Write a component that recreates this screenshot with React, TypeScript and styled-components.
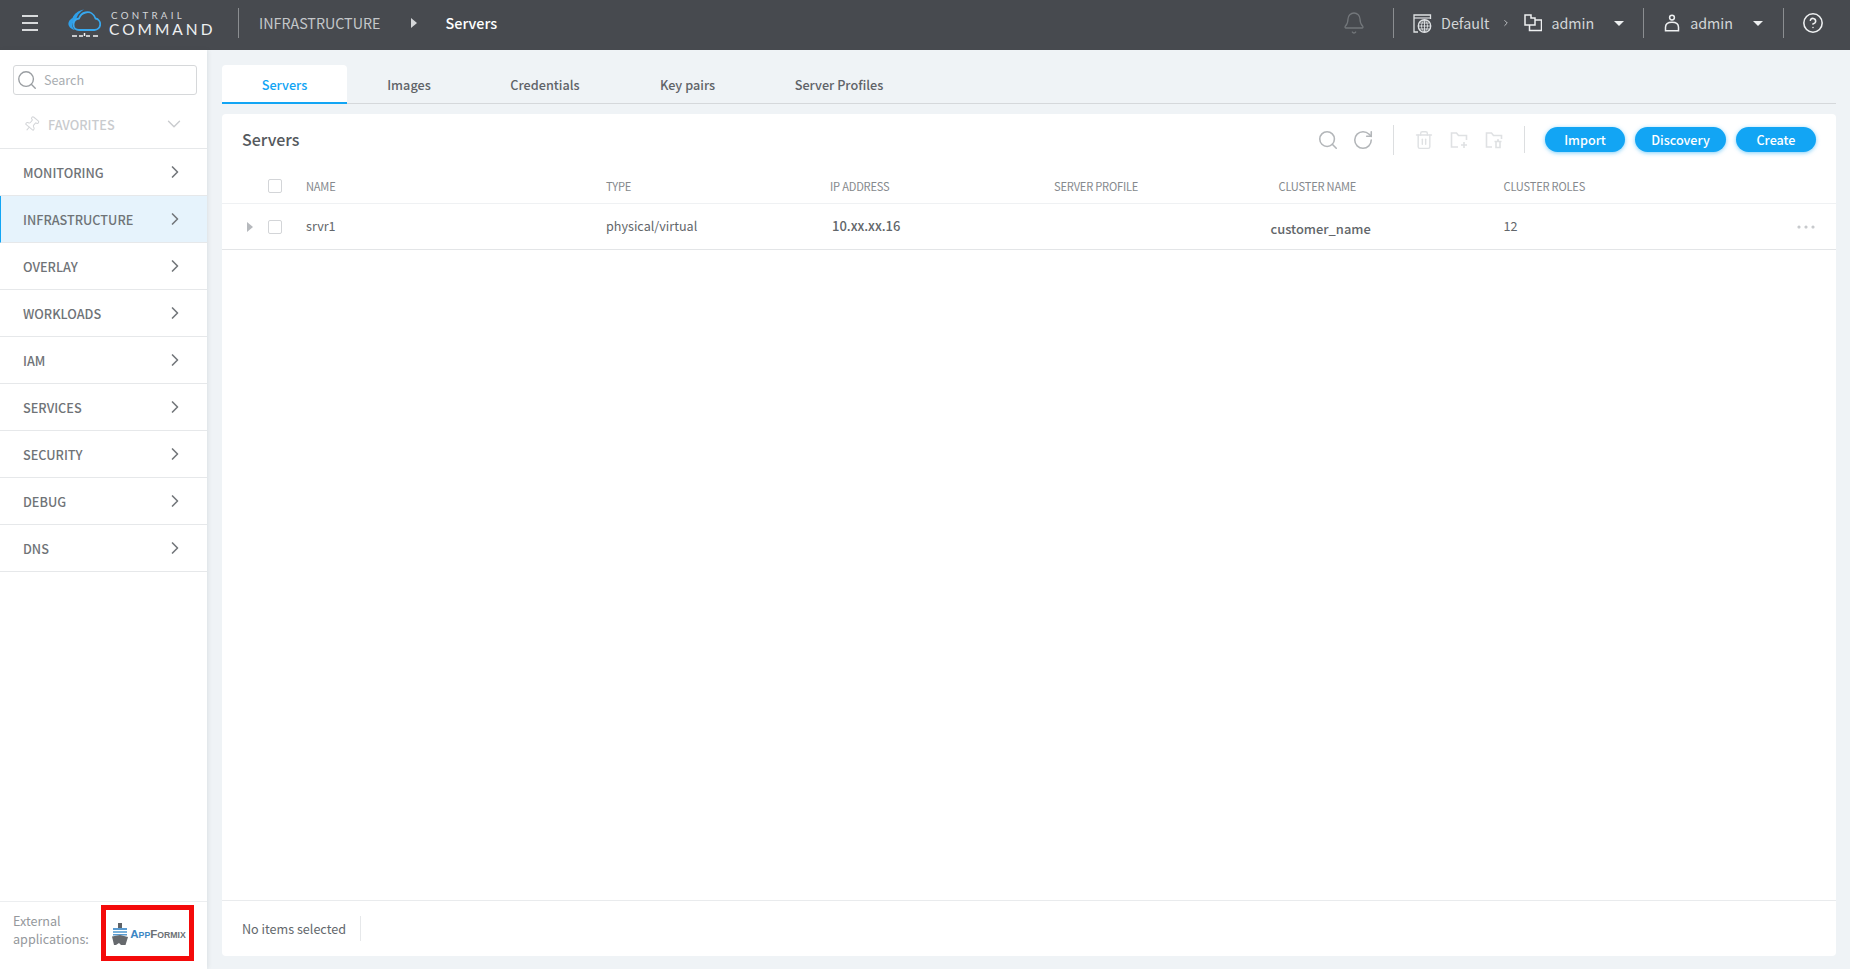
import React from "react";
import styled, { createGlobalStyle } from "styled-components";
import { Search, RotateCw, Trash2, ChevronRight, ChevronDown, Bell, CircleHelp, Pin, Ellipsis } from "lucide-react";

const Global = createGlobalStyle`
  html, body { margin: 0; padding: 0; height: 100%; }
  body { font-family: "Noto Sans CJK SC", "Noto Sans", sans-serif; background: #eff3f6; }
  * { box-sizing: border-box; }
`;

const Page = styled.div`
  width: 1850px; height: 969px; display: flex; flex-direction: column; overflow: hidden;
`;
const TopBar = styled.header`
  height: 50px; flex: none; background: #474a4f; display: flex; align-items: center; color: #e8eaec; padding-bottom: 4px;
`;
const Burger = styled.div`
  width: 16px; margin-left: 22px; display: flex; flex-direction: column; gap: 5px;
  span { display: block; height: 2px; background: #d8dadc; }
`;
const LogoWrap = styled.div`
  margin-left: 29px; display: flex; align-items: center; gap: 8px; width: 171px; height: 100%;
`;
const LogoText = styled.div`
  display: flex; flex-direction: column; font-family: Lato, sans-serif; color: #eef0f1; line-height: 1; padding-top: 3px;
`;
const LogoTop = styled.span`font-size: 9.7px; letter-spacing: 3.3px; margin-bottom: 1px; color: #d5d7d9; padding-left: 2px;`;
const LogoBottom = styled.span`font-size: 15.5px; letter-spacing: 3px;`;
const VRule = styled.div<{ $h?: number; $c?: string; $ml?: number }>`
  width: 1px; height: ${p => p.$h ?? 30}px; background: ${p => p.$c ?? "#8b8e91"}; flex: none; margin-left: ${p => p.$ml ?? 0}px;
`;
const Crumb = styled.span`font-size: 14.3px; color: #c4c7ca; margin: 0 0 2px 20px;`;
const CrumbArrow = styled.span`
  margin-left: 30px; width: 0; height: 0; border-left: 6px solid #d5d7d9;
  border-top: 5px solid transparent; border-bottom: 5px solid transparent;
`;
const CrumbNow = styled.span`font-size: 14.4px; font-weight: 500; color: #fff; margin: 0 0 2px 29px;`;
const TopRight = styled.div`margin-left: auto; display: flex; align-items: center; height: 100%; padding-right: 26px;`;
const TopLabel = styled.span`font-size: 14.3px; color: #d3d6d8; margin-bottom: 2px;`;
const Caret = styled.span`
  width: 0; height: 0; border-top: 5px solid #eef0f1; margin-left: 20px;
  border-left: 5px solid transparent; border-right: 5px solid transparent;
`;
const TopCell = styled.div<{ $gap?: number; $ml?: number }>`
  display: flex; align-items: center; gap: ${p => p.$gap ?? 9}px; margin-left: ${p => p.$ml ?? 0}px;
`;

const Body = styled.div`flex: 1; display: flex; min-height: 0;`;
const Sidebar = styled.aside`
  width: 207px; flex: none; background: #fff; display: flex; flex-direction: column;
  box-shadow: 1px 0 4px rgba(60, 70, 80, 0.1);
`;
const SearchBox = styled.div`
  margin: 15px 10px 0 13px; height: 30px; border: 1px solid #d6d8da; border-radius: 3px;
  display: flex; align-items: center; padding-left: 2px; gap: 6px;
  span { font-size: 12.6px; color: #a9adb1; margin-bottom: 2px; }
`;
const Favorites = styled.div`
  height: 54px; padding: 5px 22px 0 23px; display: flex; align-items: center; border-bottom: 1px solid #e6e8ea;
  span { font-size: 12.7px; font-weight: 500; color: #c9cbce; margin-left: 8px; flex: 1; }
`;
const MenuRow = styled.div<{ $active?: boolean }>`
  height: 47px; display: flex; align-items: center; justify-content: space-between;
  border-bottom: 1px solid #e6e8ea; font-size: 12.7px; font-weight: 500; color: #6f7377;
  background: ${p => (p.$active ? "#e6f3fc" : "#fff")};
  border-left: ${p => (p.$active ? "1px solid #12a5f4" : "0")};
  padding-left: ${p => (p.$active ? "22px" : "23px")};
  padding-right: 22px;
`;
const SideFoot = styled.div`
  margin-top: auto; height: 68px; border-top: 1px solid #eceef0; display: flex; align-items: flex-start; padding: 3px 0 0 13px;
`;
const FootLabel = styled.div`font-size: 12.6px; line-height: 18px; color: #94989c; width: 88px; margin-top: 7px;`;
const RedBox = styled.div`
  width: 93px; height: 56px; border: 5px solid #f40a0a; display: flex; align-items: center; justify-content: center; gap: 2px;
  background: #fff; padding: 2px 0 0 3px;
`;
const AfText = styled.span`
  font-family: "Liberation Sans", sans-serif; font-size: 11.5px; color: #3b86c4; font-weight: 700; white-space: nowrap;
  small { font-size: 8.7px; }
  em { font-style: normal; color: #6c7074; }
`;

const Main = styled.main`flex: 1; padding: 15px 14px 13px 15px; display: flex; flex-direction: column; min-width: 0;`;
const Tabs = styled.nav`
  height: 39px; display: flex; flex: none; border-bottom: 1px solid #d5d8db;
`;
const Tab = styled.div<{ $active?: boolean; $w: number }>`
  width: ${p => p.$w}px; display: flex; align-items: center; justify-content: center; font-size: 12.7px; font-weight: 500;
  color: ${p => (p.$active ? "#12a5f4" : "#5f6368")};
  background: ${p => (p.$active ? "#fff" : "transparent")};
  border-radius: 4px 4px 0 0;
  margin-bottom: -1px;
  padding-top: ${p => (p.$active ? "2px" : "0")};
  border-bottom: ${p => (p.$active ? "2px solid #12a5f4" : "0")};
`;
const Card = styled.section`
  margin-top: 10px; flex: 1; background: #fff; border-radius: 4px; display: flex; flex-direction: column; min-height: 0;
`;
const CardHead = styled.div`
  height: 53px; flex: none; display: flex; align-items: center; padding: 0 20px 2px;
`;
const Title = styled.h2`margin: 0 0 2px; font-size: 16px; font-weight: 500; color: #55595d;`;
const Tools = styled.div`margin-left: auto; display: flex; align-items: center;`;
const Btn = styled.button<{ $w: number; $ml?: number }>`
  width: ${p => p.$w}px; height: 25px; border-radius: 13px; border: 0; background: #12a5f4; color: #fff; padding: 0 0 1px;
  font-family: inherit; font-size: 12.6px; font-weight: 500; margin-left: ${p => p.$ml ?? 10}px;
  box-shadow: 0 1px 4px rgba(18, 165, 244, .55);
`;
const IconSlot = styled.span<{ $ml: number }>`display: flex; margin-left: ${p => p.$ml}px;`;
const Row = styled.div<{ $head?: boolean }>`
  display: grid; grid-template-columns: 84px 300px 224px 224px 224.5px 225px 200.5px 1fr;
  align-items: center;
  height: ${p => (p.$head ? 37 : 46)}px; flex: none;
  padding-top: ${p => (p.$head ? 2 : 0)}px;
  border-bottom: 1px solid ${p => (p.$head ? "#eff1f3" : "#e3e5e7")};
  font-size: ${p => (p.$head ? 11.1 : 12.6)}px;
  letter-spacing: ${p => (p.$head ? "-.2px" : "0")};
  color: ${p => (p.$head ? "#85898d" : "#62666a")};
`;
const Lead = styled.div`position: relative; display: flex; align-items: center; justify-content: flex-end; padding-right: 24px; height: 100%;`;
const Check = styled.span`width: 14px; height: 14px; border: 1px solid #d3d5d8; border-radius: 2px; background: #fff; display: block;`;
const Expand = styled.span`
  position: absolute; left: 25px; top: 50%; margin-top: -5px; width: 0; height: 0;
  border-left: 6px solid #b6b9bd; border-top: 5px solid transparent; border-bottom: 5px solid transparent;
`;
const Cell = styled.span`margin-bottom: 2px;`;
const CellBold = styled.span`font-weight: 500; font-size: 13px; margin-left: 2px;`;
const CellDrop = styled.span`font-weight: 500; font-size: 12.9px; margin-left: -8px; position: relative; top: 3px;`;
const Actions = styled.div`display: flex; justify-content: flex-end; padding-right: 18px;`;
const Spacer = styled.div`flex: 1;`;
const CardFoot = styled.div`
  height: 56px; border-top: 1px solid #e9ebed; display: flex; align-items: center; padding: 0 0 1px 20px; flex: none;
  font-size: 12.6px; color: #62676c;
`;

const Cloud = () => (
  <svg width="34" height="30" viewBox="0 0 34 30" fill="none" style={{ flex: "none" }}>
    <path d="M17 1.5C11 2.5 7 6 5.5 10 2 12 0.5 15 2 18c1 2 3 3.5 6 4-2.5-2-3.5-5-1.5-8 2-2 3-3 3.5-5C11 6 14 3.5 17 1.5z" fill="#2f9fe8" />
    <path d="M12 22h15.5a5.8 5.8 0 0 0 1-11.5C27 6 23 3.5 18.5 4.5 15 5.3 13 7.5 12 10.5 8.5 11 6.5 13.5 6.5 16.5 6.5 19.8 9 22 12 22z" stroke="#38a8ef" strokeWidth="1.8" />
    <path d="M5 28h5M12 28h4M19 28h4M26 28h5M17.5 25v3" stroke="#f4f5f6" strokeWidth="1.5" />
  </svg>
);
const FolderTrash = ({ c }: { c: string }) => (
  <svg width="18" height="18" viewBox="0 0 18 18" fill="none" stroke={c} strokeWidth="1.6" style={{ flex: "none" }}>
    <path d="M7 16H1.5V2h5l2 2.5h8V8" />
    <path d="M9.5 10.5h7M11 10.5V16.5h4V10.5M12 9h2" />
  </svg>
);
const FolderAdd = ({ c }: { c: string }) => (
  <svg width="18" height="18" viewBox="0 0 18 18" fill="none" stroke={c} strokeWidth="1.6" style={{ flex: "none" }}>
    <path d="M8 16H1.5V2h5l2 2.5h8V9" />
    <path d="M14 11v6M11 14h6" />
  </svg>
);
const TenantIcon = () => (
  <svg width="19" height="19" viewBox="0 0 19 19" fill="none" stroke="#dfe2e4" strokeWidth="1.2" style={{ flex: "none" }}>
    <path d="M5 18H1V1h16.5v4" strokeWidth="1.3" />
    <path d="M1 4h16.5" />
    <circle cx="11.5" cy="12" r="6.2" strokeWidth="1.4" />
    <path d="M5.5 12h12M11.5 6v12M6.8 9h9.4M6.8 15h9.4" strokeWidth=".9" />
    <path d="M11.5 5.8c-4 3.5-4 9 0 12.4M11.5 5.8c4 3.5 4 9 0 12.4" strokeWidth=".9" />
  </svg>
);
const ProjectIcon = () => (
  <svg width="18" height="18" viewBox="0 0 18 18" fill="none" stroke="#eef0f1" strokeWidth="1.5" style={{ flex: "none" }}>
    <path d="M1 1h6v3h4v7H1z" />
    <path d="M5.5 11v5.5h12V6h-6.5" />
  </svg>
);
const UserIcon = () => (
  <svg width="18" height="18" viewBox="0 0 18 18" fill="none" stroke="#eef0f1" strokeWidth="1.5" style={{ flex: "none" }}>
    <circle cx="9" cy="3.6" r="2.4" />
    <path d="M2.5 16.8v-3.5c0-3 2.5-5 6.5-5s6.5 2 6.5 5v3.5z" />
  </svg>
);
const ShipLogo = () => (
  <svg width="16" height="22" viewBox="0 0 16 22" style={{ flex: "none" }}>
    <rect x="6" y="0" width="4" height="5" fill="#5f6367" />
    <rect x="1" y="5" width="14" height="2" fill="#5a9bd0" />
    <rect x="1" y="8" width="14" height="2" fill="#7ab2dc" />
    <rect x="1" y="11" width="14" height="1.5" fill="#5a9bd0" />
    <path d="M0 13.5l8-1.5 8 2-2.5 8H9l-2-2-3 2H2z" fill="#66696d" />
  </svg>
);

const menu = ["MONITORING", "INFRASTRUCTURE", "OVERLAY", "WORKLOADS", "IAM", "SERVICES", "SECURITY", "DEBUG", "DNS"];
const tabs: [string, number][] = [["Servers", 125], ["Images", 124], ["Credentials", 148], ["Key pairs", 137], ["Server Profiles", 166]];

export default function App() {
  return (
    <Page>
      <Global />
      <TopBar>
        <Burger><span /><span /><span /></Burger>
        <LogoWrap>
          <Cloud />
          <LogoText><LogoTop>CONTRAIL</LogoTop><LogoBottom>COMMAND</LogoBottom></LogoText>
        </LogoWrap>
        <VRule />
        <Crumb>INFRASTRUCTURE</Crumb>
        <CrumbArrow />
        <CrumbNow>Servers</CrumbNow>
        <TopRight>
          <Bell size={24} color="#73777b" strokeWidth={1.3} />
          <VRule $ml={27} />
          <TopCell $ml={19} $gap={9}><TenantIcon /><TopLabel>Default</TopLabel></TopCell>
          <ChevronRight size={10} color="#d3d6d8" strokeWidth={2} style={{ marginLeft: 12 }} />
          <TopCell $ml={13}><ProjectIcon /><TopLabel>admin</TopLabel></TopCell>
          <Caret />
          <VRule $ml={19} />
          <TopCell $ml={19}><UserIcon /><TopLabel>admin</TopLabel></TopCell>
          <Caret />
          <VRule $ml={20} />
          <CircleHelp size={22} color="#eef0f1" strokeWidth={1.7} style={{ marginLeft: 18 }} />
        </TopRight>
      </TopBar>
      <Body>
        <Sidebar>
          <SearchBox><Search size={22} color="#9a9ea2" strokeWidth={1.5} /><span>Search</span></SearchBox>
          <Favorites>
            <Pin size={17} color="#d3d5d8" strokeWidth={1.4} style={{ transform: "rotate(40deg)" }} />
            <span>FAVORITES</span>
            <ChevronDown size={22} color="#c9cbce" strokeWidth={1.5} />
          </Favorites>
          {menu.map(m => (
            <MenuRow key={m} $active={m === "INFRASTRUCTURE"}>
              {m}
              <ChevronRight size={20} color="#73777b" strokeWidth={2} />
            </MenuRow>
          ))}
          <SideFoot>
            <FootLabel>External applications:</FootLabel>
            <RedBox>
              <ShipLogo />
              <AfText>A<small>PP</small><em>F<small>ORMIX</small></em></AfText>
            </RedBox>
          </SideFoot>
        </Sidebar>
        <Main>
          <Tabs>
            {tabs.map(([t, w], i) => <Tab key={t} $w={w} $active={i === 0}>{t}</Tab>)}
          </Tabs>
          <Card>
            <CardHead>
              <Title>Servers</Title>
              <Tools>
                <Search size={22} color="#b3b6b9" strokeWidth={1.7} />
                <RotateCw size={22} color="#b3b6b9" strokeWidth={1.7} style={{ marginLeft: 13 }} />
                <VRule $h={30} $c="#dcdee0" $ml={19} />
                <Trash2 size={20} color="#dfe1e3" strokeWidth={1.7} style={{ marginLeft: 20 }} />
                <IconSlot $ml={16}><FolderAdd c="#dfe1e3" /></IconSlot>
                <IconSlot $ml={17}><FolderTrash c="#dfe1e3" /></IconSlot>
                <VRule $h={27} $c="#dcdee0" $ml={21} />
                <Btn $w={80} $ml={20}>Import</Btn>
                <Btn $w={91}>Discovery</Btn>
                <Btn $w={80}>Create</Btn>
              </Tools>
            </CardHead>
            <Row $head>
              <Lead><Check /></Lead>
              <span>NAME</span><span>TYPE</span><span>IP ADDRESS</span><span>SERVER PROFILE</span><span>CLUSTER NAME</span><span>CLUSTER ROLES</span>
            </Row>
            <Row>
              <Lead><Expand /><Check /></Lead>
              <Cell>srvr1</Cell>
              <Cell>physical/virtual</Cell>
              <Cell><CellBold>10.xx.xx.16</CellBold></Cell>
              <span />
              <Cell><CellDrop>customer_name</CellDrop></Cell>
              <Cell>12</Cell>
              <Actions><Ellipsis size={24} color="#c0c3c6" strokeWidth={1.1} /></Actions>
            </Row>
            <Spacer />
            <CardFoot>
              No items selected
              <VRule $h={25} $c="#e6e8ea" $ml={14} />
            </CardFoot>
          </Card>
        </Main>
      </Body>
    </Page>
  );
}
